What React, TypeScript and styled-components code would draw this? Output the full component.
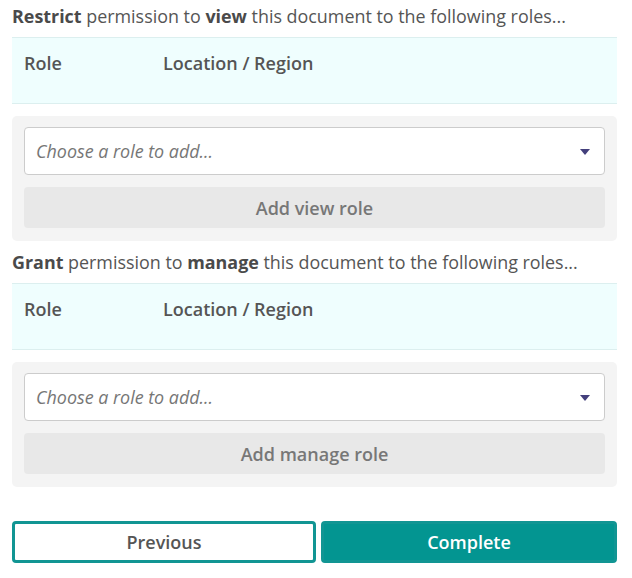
import React from "react";
import styled, { createGlobalStyle } from "styled-components";

const GlobalStyle = createGlobalStyle`
  body {
    margin: 0;
    background: #ffffff;
    font-family: "Open Sans", "Noto Sans", sans-serif;
    color: #555555;
  }
`;

const Page = styled.div`
  width: 605px;
  padding: 0 15px 0 12px;
`;

const Intro = styled.p`
  margin: 0;
  padding: 4px 0 9px;
  font-size: 17.9px;
  line-height: 24px;
  color: #555555;
  white-space: nowrap;

  b {
    font-weight: 700;
    color: #4a4a4a;
  }
`;

const Section = styled.section<{ $first?: boolean }>`
  padding-top: ${(p) => (p.$first ? "0" : "5px")};
`;

const RoleTable = styled.div`
  height: 65px;
  background: #effefe;
  border-top: 1px solid #dcefef;
  border-bottom: 1px solid #dcefef;
  margin-bottom: 12px;
`;

const HeaderRow = styled.div`
  display: grid;
  grid-template-columns: 139px 1fr;
  padding: 13px 12px 0;
  font-size: 18px;
  line-height: 24px;
  font-weight: 600;
  color: #555555;
`;

const AddBox = styled.div`
  display: flex;
  flex-direction: column;
  gap: 12px;
  padding: 11px 12px 13px;
  background: #f4f4f4;
  border-radius: 5px;
`;

const SelectBox = styled.div`
  display: flex;
  align-items: center;
  justify-content: space-between;
  height: 46px;
  padding: 0 14px 0 11px;
  background: #ffffff;
  border: 1px solid #cccccc;
  border-radius: 4px;
  font-size: 17.9px;
  font-style: italic;
  color: #767676;
`;

const Caret = styled.span`
  width: 0;
  height: 0;
  border-left: 5px solid transparent;
  border-right: 5px solid transparent;
  border-top: 6px solid #433f7c;
  margin-top: 1px;
`;

const AddButton = styled.button`
  height: 41px;
  border: none;
  border-radius: 4px;
  background: #e8e8e8;
  font-family: inherit;
  font-size: 18px;
  font-weight: 600;
  color: #777777;
  cursor: pointer;
`;

const Footer = styled.div`
  display: grid;
  grid-template-columns: 304px 1fr;
  gap: 5px;
  margin-top: 34px;
`;

const NavButton = styled.button<{ $primary?: boolean }>`
  height: 42px;
  border-radius: 4px;
  border: 3px solid #119593;
  background: ${(p) => (p.$primary ? "#039591" : "#ffffff")};
  color: ${(p) => (p.$primary ? "#ffffff" : "#555555")};
  font-family: inherit;
  font-size: 18px;
  font-weight: 600;
  cursor: pointer;
`;

type PermissionProps = {
  verb: string;
  action: string;
  button: string;
  first?: boolean;
};

const PermissionBlock = ({ verb, action, button, first }: PermissionProps) => (
  <Section $first={first}>
    <Intro>
      <b>{verb}</b> permission to <b>{action}</b> this document to the following roles...
    </Intro>
    <RoleTable>
      <HeaderRow>
        <span>Role</span>
        <span>Location / Region</span>
      </HeaderRow>
    </RoleTable>
    <AddBox>
      <SelectBox>
        <span>Choose a role to add...</span>
        <Caret />
      </SelectBox>
      <AddButton>{button}</AddButton>
    </AddBox>
  </Section>
);

export default function App() {
  return (
    <Page>
      <GlobalStyle />
      <PermissionBlock verb="Restrict" action="view" button="Add view role" first />
      <PermissionBlock verb="Grant" action="manage" button="Add manage role" />
      <Footer>
        <NavButton>Previous</NavButton>
        <NavButton $primary>Complete</NavButton>
      </Footer>
    </Page>
  );
}
